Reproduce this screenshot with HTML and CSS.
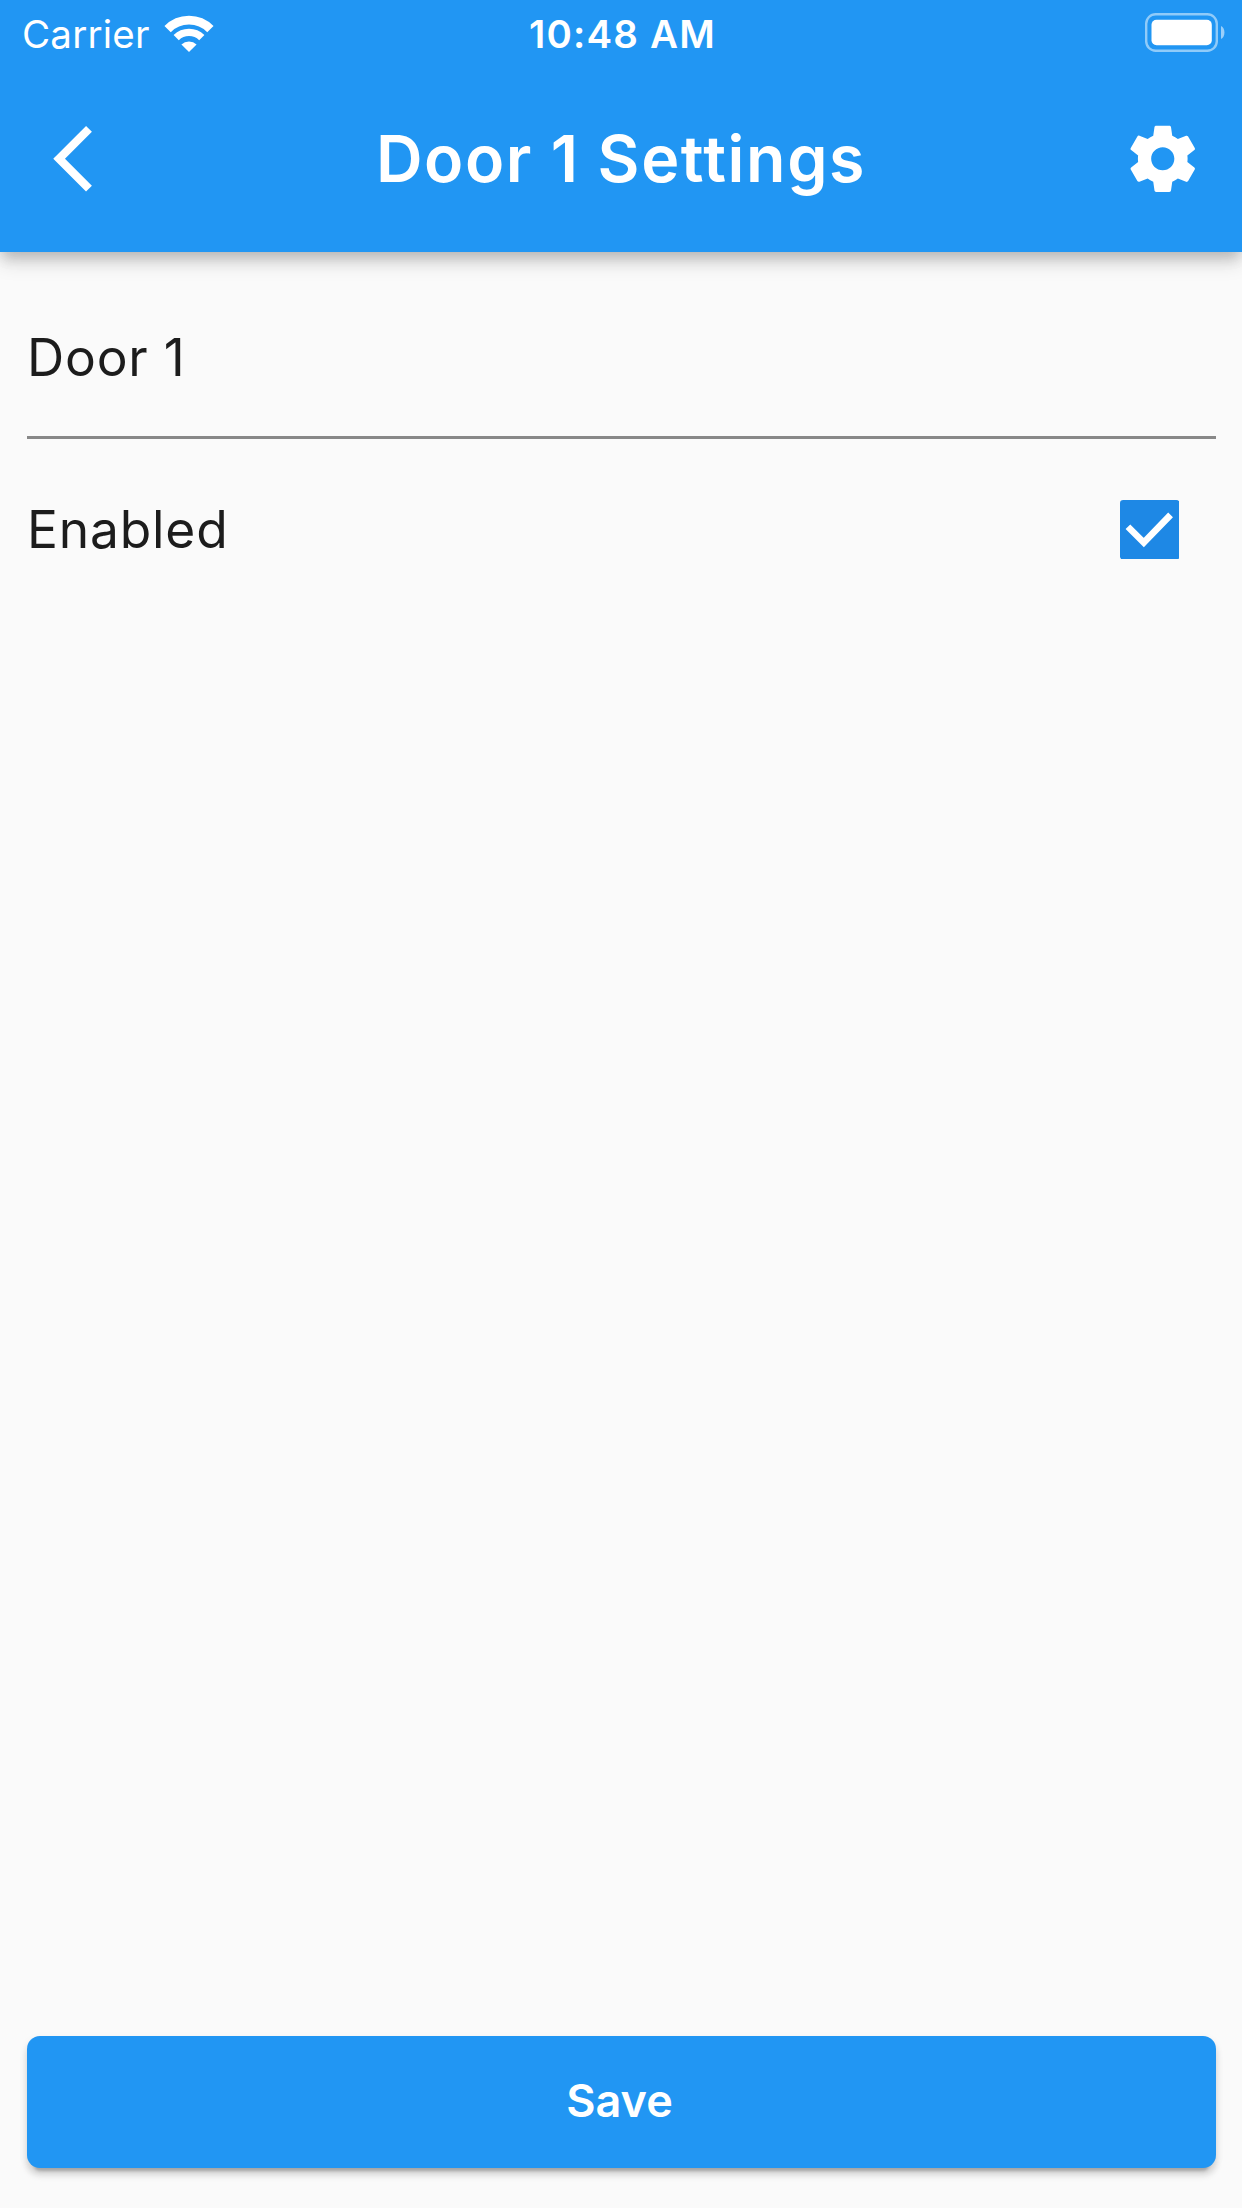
FILE: index.html
```html
<!DOCTYPE html>
<html lang="en">
<head>
<meta charset="utf-8">
<title>Door 1 Settings</title>
<link rel="stylesheet" href="styles.css">
</head>
<body>
<div class="screen">
  <header class="header">
    <div class="status">
      <div class="status-left">
        <span class="carrier">Carrier</span>
        <svg class="wifi" viewBox="0 0 50 38" fill="none" stroke="#fff">
          <path d="M3.6 14.2A30 30 0 0 1 46.4 14.2" stroke-width="8.8"/>
          <path d="M12.2 22.6A18.2 18.2 0 0 1 37.8 22.6" stroke-width="7.4"/>
          <path d="M25 37L17.4 29.5A11 11 0 0 1 32.6 29.5Z" fill="#fff" stroke="none"/>
        </svg>
      </div>
      <span class="time">10:48 AM</span>
      <svg class="battery" viewBox="0 0 80 40">
        <rect x="1.2" y="1.2" width="70.6" height="36.6" rx="9.5" fill="none" stroke="#fff" stroke-opacity=".5" stroke-width="2.4"/>
        <rect x="6.5" y="6.7" width="60.3" height="25.6" rx="5" fill="#fff"/>
        <path d="M76 13C80.600 14.500 80.600 24.500 76 26Z" fill="#fff" fill-opacity=".55"/>
      </svg>
    </div>
    <div class="toolbar">
      <svg class="icon" viewBox="-4 0 24 24" fill="#fff"><path d="M11.670 3.870L9.900 2.100 0 12l9.900 9.900 1.770-1.770L3.540 12z"/></svg>
      <h1 class="title">Door 1 Settings</h1>
      <svg class="icon" viewBox="0 0 24 24" fill="#fff"><path d="M19.430 12.980c.04-.32.07-.64.07-.98s-.03-.66-.07-.98l2.110-1.650c.19-.15.24-.42.12-.64l-2-3.460c-.12-.22-.39-.3-.61-.22l-2.490 1c-.52-.4-1.080-.73-1.690-.98l-.38-2.650C14.460 2.180 14.250 2 14 2h-4c-.25 0-.46.18-.49.42l-.38 2.650c-.61.25-1.170.59-1.690.98l-2.490-1c-.23-.09-.49 0-.61.22l-2 3.460c-.13.22-.07.49.12.64l2.110 1.650c-.04.32-.07.65-.07.98s.03.66.07.98l-2.110 1.650c-.19.15-.24.42-.12.64l2 3.460c.12.22.39.3.61.22l2.490-1c.52.4 1.080.73 1.690.98l.38 2.650c.03.24.24.42.49.42h4c.25 0 .46-.18.49-.42l.38-2.650c.61-.25 1.170-.59 1.690-.98l2.490 1c.23.09.49 0 .61-.22l2-3.460c.12-.22.07-.49-.12-.64l-2.110-1.650zM12 15.500c-1.930 0-3.500-1.570-3.500-3.500s1.570-3.500 3.500-3.500 3.500 1.570 3.500 3.500-1.570 3.500-3.500 3.500z"/></svg>
    </div>
  </header>
  <main class="form">
    <div class="field"><span class="body-text">Door 1</span></div>
    <div class="row">
      <span class="body-text">Enabled</span>
      <svg class="checkbox" viewBox="0 0 18 18">
        <rect width="18" height="18" rx="1" fill="#1e88e5"/>
        <path d="M2.400 8.100L7.200 12.900 15.300 4.500" fill="none" stroke="#fff" stroke-width="2"/>
      </svg>
    </div>
  </main>
  <footer class="footer"><button class="save" type="button">Save</button></footer>
</div>
</body>
</html>
```
FILE: styles.css
```css
* { box-sizing: border-box; }

body {
  margin: 0;
  background: #fafafa;
  font-family: Inter, "Liberation Sans", sans-serif;
}

.screen {
  display: flex;
  flex-direction: column;
  width: 1242px;
  height: 2208px;
  overflow: hidden;
}

.header {
  height: 252px;
  color: #fff;
  background: #2196f3;
  box-shadow: 0 7px 13px -3px rgba(0, 0, 0, .18), 0 13px 17px rgba(0, 0, 0, .1), 0 3px 20px rgba(0, 0, 0, .06);
}

.status {
  display: grid;
  grid-template-columns: 1fr auto 1fr;
  align-items: center;
  height: 66px;
  padding: 0 17px 0 22px;
}

.status-left {
  display: flex;
  align-items: center;
  gap: 14px;
}

.carrier {
  padding-top: 2px;
  font-size: 38.500px;
  line-height: 64px;
  letter-spacing: .2px;
}

.time {
  padding: 2px 2px 0 0;
  font-size: 38.500px;
  font-weight: 560;
  line-height: 64px;
  letter-spacing: 1.200px;
}

.wifi { width: 50px; height: 38px; margin-top: 1px; }
.battery { width: 80px; height: 40px; justify-self: end; }

.toolbar {
  display: flex;
  align-items: center;
  justify-content: space-between;
  height: 186px;
  padding: 0 40px;
}

.icon { width: 79.500px; height: 79.500px; }

.title {
  margin: 0;
  font-size: 64.500px;
  font-weight: 560;
  line-height: 80px;
  letter-spacing: 1.600px;
}

.form {
  flex: 1;
  padding: 0 26.500px;
}

.field {
  display: flex;
  align-items: center;
  height: 187px;
  padding-top: 27px;
  border-bottom: 3px solid #888;
}

.row {
  display: flex;
  align-items: center;
  justify-content: space-between;
  height: 181px;
  padding-right: 36.500px;
}

.body-text {
  padding: 0 0 2px .5px;
  font-size: 51.500px;
  line-height: 60px;
  letter-spacing: .800px;
  color: #1c1c1c;
}

.checkbox { width: 59.500px; height: 59.500px; }

.footer { padding: 0 26.500px 40px; }

.save {
  display: block;
  width: 100%;
  height: 132px;
  padding: 0 3px 2px 0;
  border: 0;
  border-radius: 13px;
  color: #fff;
  background: #2196f3;
  box-shadow: 0 10px 3px -7px rgba(0, 0, 0, .2), 0 7px 7px rgba(0, 0, 0, .14), 0 3px 10px rgba(0, 0, 0, .06);
  font: 600 45px/60px Inter, "Liberation Sans", sans-serif;
}
```
